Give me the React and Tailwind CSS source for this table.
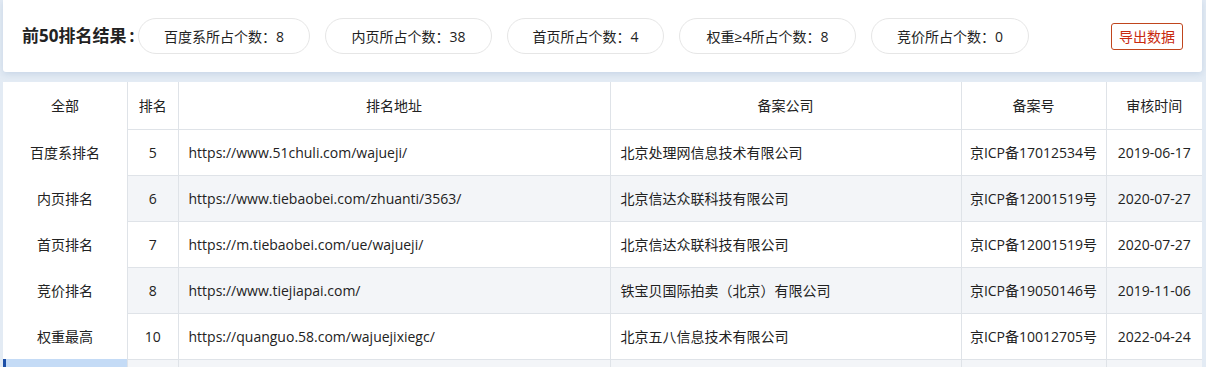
import React from "react";

const stats = [
  { label: "百度系所占个数", value: 8, w: "w-[172px]" },
  { label: "内页所占个数", value: 38, w: "w-[167px]" },
  { label: "首页所占个数", value: 4, w: "w-[157px]" },
  { label: "权重≥4所占个数", value: 8, w: "w-[177px]" },
  { label: "竞价所占个数", value: 0, w: "w-[158px]" },
];

const tabs = ["全部", "百度系排名", "内页排名", "首页排名", "竞价排名", "权重最高", ""];

const rows = [
  { rank: 5, url: "https://www.51chuli.com/wajueji/", company: "北京处理网信息技术有限公司", icp: "京ICP备17012534号", date: "2019-06-17" },
  { rank: 6, url: "https://www.tiebaobei.com/zhuanti/3563/", company: "北京信达众联科技有限公司", icp: "京ICP备12001519号", date: "2020-07-27" },
  { rank: 7, url: "https://m.tiebaobei.com/ue/wajueji/", company: "北京信达众联科技有限公司", icp: "京ICP备12001519号", date: "2020-07-27" },
  { rank: 8, url: "https://www.tiejiapai.com/", company: "铁宝贝国际拍卖（北京）有限公司", icp: "京ICP备19050146号", date: "2019-11-06" },
  { rank: 10, url: "https://quanguo.58.com/wajuejixiegc/", company: "北京五八信息技术有限公司", icp: "京ICP备10012705号", date: "2022-04-24" },
  { rank: "", url: "", company: "", icp: "", date: "" },
];

export default function App() {
  return (
    <div
      className="w-[1206px] h-[367px] overflow-hidden bg-[#e3ebf4] pl-[3px] pr-[4px] text-[#222]"
      style={{ fontFamily: '"Open Sans", "Noto Sans CJK SC", sans-serif' }}
    >
      {/* SUMMARY BAR */}
      <div className="h-[72px] bg-white rounded-b-[3px] shadow-[0_2px_6px_rgba(120,150,190,0.25)] flex items-center pl-[19px] pr-[19px]">
        <h1 className="w-[116px] text-[17px] font-bold whitespace-nowrap">
          前50排名结果<span className="ml-[3px]">:</span>
        </h1>
        <div className="flex gap-[15px]">
          {stats.map((s) => (
            <div
              key={s.label}
              className={`${s.w} h-[36px] rounded-full border border-[#e6e6e6] flex items-center justify-center text-[14px] whitespace-nowrap`}
            >
              {s.label}：{s.value}
            </div>
          ))}
        </div>
        <button className="ml-auto h-[27px] px-[7px] border border-[#c0451d] rounded-[3px] text-[14px] text-[#c8290e]">
          导出数据
        </button>
      </div>

      {/* TABLE AREA */}
      <div className="mt-[10px] flex">
        <div className="w-[125px] bg-white border-r border-[#dfe3e8] flex flex-col">
          {tabs.map((t, i) => (
            <div
              key={i}
              className={`flex items-center justify-center text-[14px] ${i === 0 ? "h-[47px]" : "h-[46px]"} ${
                i === 6 ? "bg-[#c4dbf6] border-l-[3px] border-[#1d4fa6]" : ""
              }`}
            >
              {t}
            </div>
          ))}
        </div>

        <table className="flex-1 border-collapse text-[14px] table-fixed bg-white">
          <colgroup>
            <col className="w-[50px]" />
            <col className="w-[432px]" />
            <col className="w-[351px]" />
            <col className="w-[145px]" />
            <col className="w-[96px]" />
          </colgroup>
          <thead>
            <tr className="h-[47px]">
              <th className="font-normal border-b border-r border-[#dfe3e8]">排名</th>
              <th className="font-normal border-b border-r border-[#dfe3e8]">排名地址</th>
              <th className="font-normal border-b border-r border-[#dfe3e8]">备案公司</th>
              <th className="font-normal border-b border-r border-[#dfe3e8]">备案号</th>
              <th className="font-normal border-b border-[#dfe3e8]">审核时间</th>
            </tr>
          </thead>
          <tbody>
            {rows.map((r, i) => (
              <tr key={i} className={`h-[46px] ${i % 2 === 1 ? "bg-[#f3f5f8]" : "bg-white"}`}>
                <td className="text-center border-b border-r border-[#dfe3e8]">{r.rank}</td>
                <td className="pl-[10px] border-b border-r border-[#dfe3e8] whitespace-nowrap">{r.url}</td>
                <td className="pl-[10px] border-b border-r border-[#dfe3e8] whitespace-nowrap">{r.company}</td>
                <td className="text-center border-b border-r border-[#dfe3e8] whitespace-nowrap">{r.icp}</td>
                <td className="text-center border-b border-[#dfe3e8] whitespace-nowrap">{r.date}</td>
              </tr>
            ))}
          </tbody>
        </table>
      </div>
    </div>
  );
}
